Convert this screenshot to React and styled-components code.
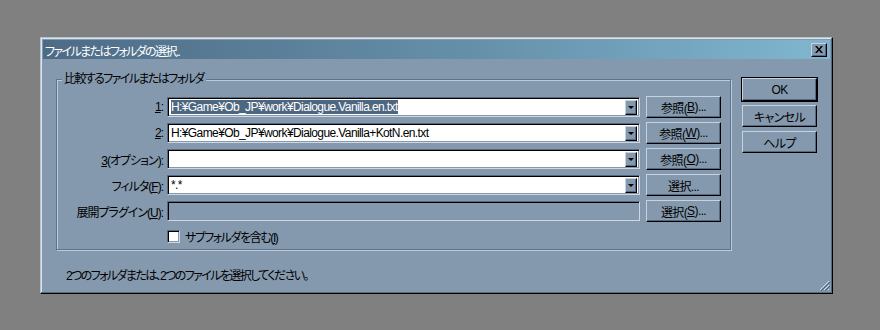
import React from 'react'
import styled, { createGlobalStyle } from 'styled-components'

const face = '#8599ae'
const light = '#c6d2de'
const shadow = '#56697e'

const Global = createGlobalStyle`
  body {
    margin: 0;
    background: #808080;
    font-family: "Liberation Sans", "Noto Sans CJK JP", sans-serif;
    font-size: 12px;
    font-feature-settings: "palt";
    letter-spacing: -0.6px;
  }
`

function Dialog() {
  return (
    <Page>
      <Global />
      <Window>
        <TitleBar>
          <Title>ファイルまたはフォルダの選択..</Title>
          <CloseButton>
            <svg width="8" height="7" viewBox="0 0 8 7">
              <path d="M0 0h2l2 2.5L6 0h2L5 3.5 8 7H6L4 4.5 2 7H0l3-3.5z" fill="#000" />
            </svg>
          </CloseButton>
        </TitleBar>
        <Body>
          <Main>
            <Group>
              <Legend>比較するファイルまたはフォルダ</Legend>
              <Row>
                <Label><u>1</u>:</Label>
                <Combo>
                  <Field><Selected>H:¥Game¥Ob_JP¥work¥Dialogue.Vanilla.en.txt</Selected></Field>
                  <DropButton><Arrow /></DropButton>
                </Combo>
                <Button>参照(<u>B</u>)...</Button>
              </Row>
              <Row>
                <Label><u>2</u>:</Label>
                <Combo>
                  <Field>H:¥Game¥Ob_JP¥work¥Dialogue.Vanilla+KotN.en.txt</Field>
                  <DropButton><Arrow /></DropButton>
                </Combo>
                <Button>参照(<u>W</u>)...</Button>
              </Row>
              <Row>
                <Label><u>3</u>(オプション):</Label>
                <Combo>
                  <Field />
                  <DropButton><Arrow /></DropButton>
                </Combo>
                <Button>参照(<u>O</u>)...</Button>
              </Row>
              <Row>
                <Label>フィルタ(<u>F</u>):</Label>
                <Combo>
                  <Field>*.*</Field>
                  <DropButton><Arrow /></DropButton>
                </Combo>
                <Button>選択...</Button>
              </Row>
              <Row>
                <Label>展開プラグイン(<u>U</u>):</Label>
                <Combo $disabled />
                <Button>選択(<u>S</u>)...</Button>
              </Row>
              <CheckRow>
                <CheckBox />
                <CheckText>サブフォルダを含む(<u>I</u>)</CheckText>
              </CheckRow>
            </Group>
            <Status>2つのフォルダまたは、2つのファイルを選択してください。</Status>
          </Main>
          <Side>
            <Button $default>OK</Button>
            <Button>キャンセル</Button>
            <Button>ヘルプ</Button>
          </Side>
        </Body>
        <Grip>
          <svg width="11" height="11" viewBox="0 0 11 11">
            <path d="M10 1L1 10M10 5L5 10M10 9L9 10" stroke="#d6dee7" strokeWidth="1" />
            <path d="M11 2L2 11M11 6L6 11" stroke="#4a5c70" strokeWidth="1" />
          </svg>
        </Grip>
      </Window>
    </Page>
  )
}

export default function App() {
  return <Dialog />
}

const Page = styled.div`
  width: 880px;
  height: 330px;
  padding: 37px 0 0 40px;
  box-sizing: border-box;
`

const Window = styled.div`
  position: relative;
  width: 793px;
  height: 257px;
  box-sizing: border-box;
  background: ${face};
  border-top: 1px solid #b4c3d2;
  border-left: 1px solid #b4c3d2;
  border-right: 1px solid #000;
  border-bottom: 1px solid #000;
  box-shadow: inset -1px -1px 0 ${shadow}, inset 1px 1px 0 #dce4ec;
  padding: 2px;
  display: flex;
  flex-direction: column;
`

const TitleBar = styled.div`
  height: 19px;
  display: flex;
  align-items: center;
  justify-content: space-between;
  padding: 0 3px 0 2px;
  background: linear-gradient(90deg, #4e6b86 0%, #6690aa 55%, #80b6cf 100%);
`

const Title = styled.span`
  color: #fff;
  letter-spacing: -1.6px;
  padding-top: 1px;
`

const CloseButton = styled.div`
  width: 16px;
  height: 14px;
  box-sizing: border-box;
  display: flex;
  align-items: center;
  justify-content: center;
  background: ${face};
  border-top: 1px solid ${light};
  border-left: 1px solid ${light};
  border-right: 1px solid #000;
  border-bottom: 1px solid #000;
  box-shadow: inset -1px -1px 0 ${shadow};
`

const Body = styled.div`
  display: flex;
  align-items: flex-start;
  padding: 20px 0 0 13px;
`

const Main = styled.div`
  display: flex;
  flex-direction: column;
`

const Group = styled.div`
  position: relative;
  width: 675px;
  height: 171px;
  box-sizing: border-box;
  border: 1px solid #5f7389;
  box-shadow: inset 1px 1px 0 #bccadb, 1px 1px 0 #bccadb;
  padding-top: 16px;
  display: flex;
  flex-direction: column;
  gap: 4px;
`

const Legend = styled.span`
  position: absolute;
  top: -8px;
  left: 5px;
  padding: 0 3px 0 2px;
  background: ${face};
  line-height: 14px;
  letter-spacing: -1.6px;
`

const Row = styled.div`
  display: flex;
  align-items: center;
  height: 22px;
`

const Label = styled.span`
  width: 106px;
  text-align: right;
  margin-right: 4px;
  white-space: nowrap;
  letter-spacing: -1px;
`

const Combo = styled.div`
  width: 473px;
  height: 20px;
  box-sizing: border-box;
  display: flex;
  align-items: center;
  background: ${p => (p.$disabled ? face : '#fff')};
  border-top: 1px solid ${shadow};
  border-left: 1px solid ${shadow};
  border-right: 1px solid #cfd8e2;
  border-bottom: 1px solid #cfd8e2;
  box-shadow: inset 1px 1px 0 #000, inset -1px -1px 0 ${face};
  padding: 2px;
  margin-right: 6px;
`

const Field = styled.div`
  flex: 1;
  height: 14px;
  line-height: 14px;
  padding-left: 1px;
  white-space: nowrap;
  overflow: hidden;
`

const Selected = styled.span`
  background: #4e6780;
  color: #fff;
  padding: 1px 0;
`

const DropButton = styled.div`
  width: 12px;
  height: 15px;
  box-sizing: border-box;
  display: flex;
  align-items: center;
  justify-content: center;
  background: ${face};
  border-top: 1px solid ${light};
  border-left: 1px solid ${light};
  border-right: 1px solid #000;
  border-bottom: 1px solid #000;
  box-shadow: inset -1px -1px 0 ${shadow};
`

const Arrow = styled.span`
  width: 0;
  height: 0;
  border-left: 3px solid transparent;
  border-right: 3px solid transparent;
  border-top: 3px solid #000;
  margin-top: 1px;
`

const Button = styled.div`
  width: 75px;
  height: ${p => (p.$default ? '23px' : '22px')};
  box-sizing: border-box;
  display: flex;
  align-items: center;
  justify-content: center;
  background: ${face};
  border-top: 1px solid ${light};
  border-left: 1px solid ${light};
  border-right: 1px solid #000;
  border-bottom: 1px solid #000;
  box-shadow: inset -1px -1px 0 ${shadow};
  outline: ${p => (p.$default ? '1px solid #000' : 'none')};
  outline-offset: 0;
  white-space: nowrap;
`

const CheckRow = styled.label`
  display: flex;
  align-items: center;
  gap: 5px;
  margin: 2px 0 0 110px;
`

const CheckText = styled.span`
  letter-spacing: -1.4px;
`

const CheckBox = styled.span`
  width: 13px;
  height: 13px;
  box-sizing: border-box;
  background: #fff;
  border-top: 1px solid ${shadow};
  border-left: 1px solid ${shadow};
  border-right: 1px solid #cfd8e2;
  border-bottom: 1px solid #cfd8e2;
  box-shadow: inset 1px 1px 0 #000, inset -1px -1px 0 ${face};
`

const Status = styled.div`
  margin: 19px 0 0 10px;
  line-height: 14px;
  letter-spacing: -1.6px;
`

const Side = styled.div`
  display: flex;
  flex-direction: column;
  gap: 4px;
  margin: -1px 0 0 11px;
`

const Grip = styled.div`
  position: absolute;
  right: 2px;
  bottom: 2px;
  width: 11px;
  height: 11px;
`
